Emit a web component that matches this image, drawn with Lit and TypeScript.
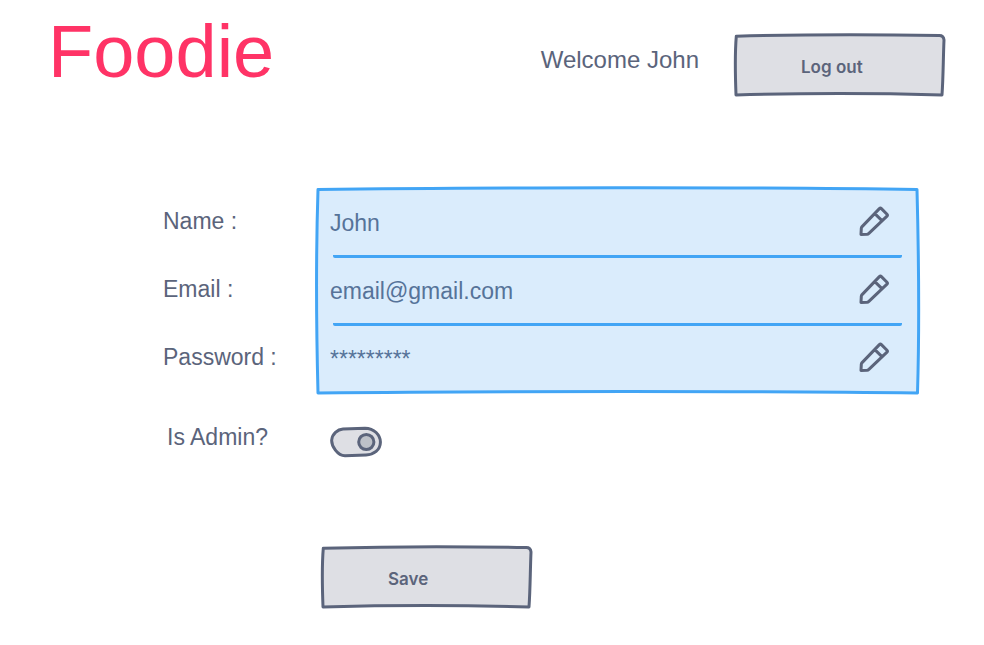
import { LitElement, html, css, svg } from "lit";
import { customElement, property, state } from "lit/decorators.js";

const BUTTON_OUTLINE =
  "M2.3 2.2 C60 0.6 150 0.4 205 1.6 Q209.5 1.4 210 6 C209.2 25 209.2 45 208 61 C150 59.4 60 59.4 2 61 C1.2 40 0.8 20 2.3 2.2 Z";

const PANEL_OUTLINE =
  "M2 2.5 C150 0.5 450 0 601 2.5 C602.5 60 603.5 140 601.5 206 C450 204 180 204 2 206 C0.3 140 -0.2 70 2 2.5 Z";

@customElement("sketch-button")
class SketchButton extends LitElement {
  @property() label = "";

  static styles = css`
    :host {
      display: block;
    }
    .button {
      display: grid;
      align-items: center;
      width: 211px;
      height: 62px;
      padding: 0;
      border: 0;
      background: none;
      color: #5b647b;
      font: 600 17px/24px Inter, "Liberation Sans", sans-serif;
      text-align: left;
      cursor: pointer;
    }
    .frame,
    .text {
      grid-area: 1 / 1;
    }
    .frame {
      width: 100%;
      height: 100%;
      overflow: visible;
      fill: #dedfe4;
      stroke: #5b647b;
      stroke-width: 3;
      stroke-linejoin: round;
    }
    .text {
      padding: 3px 0 0 67px;
    }
  `;

  render() {
    return html`
      <button class="button" type="button">
        <svg class="frame" viewBox="0 0 211 62" preserveAspectRatio="none" aria-hidden="true">
          <path d=${BUTTON_OUTLINE} />
        </svg>
        <span class="text">${this.label}</span>
      </button>
    `;
  }
}

interface Field {
  id: string;
  label: string;
  value: string;
}

@customElement("app-root")
class AppRoot extends LitElement {
  @state() private admin = true;

  private fields: Field[] = [
    { id: "name", label: "Name :", value: "John" },
    { id: "email", label: "Email :", value: "email@gmail.com" },
    { id: "password", label: "Password :", value: "*********" },
  ];

  static styles = css`
    :host {
      display: block;
      background: #ffffff;
      color: #5b647b;
      font: 23px/28px "Liberation Sans", Arial, sans-serif;
    }
    .header {
      display: flex;
      justify-content: space-between;
      align-items: flex-start;
      padding: 15px 39px 0 48px;
    }
    .title {
      margin: 0;
      color: #ff3366;
      font-size: 74px;
      line-height: 74px;
      font-weight: normal;
    }
    .session {
      display: flex;
      gap: 35px;
      padding-top: 19px;
    }
    .welcome {
      margin: 0;
      font-size: 24px;
      line-height: 52px;
    }
    .form {
      display: grid;
      grid-template-columns: 153px 1fr;
      padding: 91px 65px 32px 163px;
    }
    .labels {
      display: grid;
      grid-auto-rows: 68px;
      align-items: center;
    }
    .panel {
      display: grid;
      height: 207px;
    }
    .panel-frame,
    .rows {
      grid-area: 1 / 1;
      min-width: 0;
    }
    .panel-frame {
      width: 100%;
      height: 207px;
      overflow: visible;
      fill: #daecfc;
      stroke: #42a5f5;
      stroke-width: 3;
      stroke-linejoin: round;
    }
    .rows {
      display: grid;
      grid-auto-rows: 68px;
      padding: 3px 17px 0;
    }
    .row {
      display: flex;
      align-items: center;
      gap: 16px;
      padding-right: 13px;
      border-bottom: 3px solid #42a5f5;
      border-radius: 2px;
    }
    .row:last-child {
      border-bottom-color: transparent;
    }
    .input {
      flex: 1;
      min-width: 0;
      margin-left: -3px;
      padding: 0;
      border: 0;
      outline: 0;
      background: none;
      color: #567399;
      font: inherit;
    }
    .edit {
      width: 30px;
      height: 34px;
      padding: 0 0 4px;
      border: 0;
      background: none;
      cursor: pointer;
    }
    .pencil {
      display: block;
      fill: none;
      stroke: #5b647b;
      stroke-width: 3;
      stroke-linecap: round;
      stroke-linejoin: round;
    }
    .admin-label {
      padding: 29px 0 0 4px;
    }
    .admin-control {
      padding: 32px 0 0 14px;
    }
    .toggle {
      display: grid;
      width: 52px;
      height: 32px;
    }
    .toggle-input,
    .toggle-face {
      grid-area: 1 / 1;
      width: 52px;
      height: 32px;
      margin: 0;
    }
    .toggle-input {
      opacity: 0;
      z-index: 1;
      cursor: pointer;
    }
    .toggle-face {
      stroke: #5b647b;
      stroke-width: 3;
      fill: #dedfe4;
    }
    .knob {
      fill: #bdc1c8;
    }
    .actions {
      grid-column: 2;
      padding: 88px 0 0 5px;
    }
  `;

  private pencil() {
    return svg`
      <svg class="pencil" width="30" height="30" viewBox="0 0 30 30" aria-hidden="true">
        <path d="M2 28.4 L2.3 22.4 Q2.4 21.4 3.1 20.6 L20.4 2.6 Q21.4 1.6 22.4 2.6 L28 8.2 Q29 9.2 28 10.2 L9.9 27.4 Q9 28.2 8 28.3 Z M15.8 7.6 L23.2 14.8" />
      </svg>
    `;
  }

  render() {
    return html`
      <header class="header">
        <h1 class="title">Foodie</h1>
        <div class="session">
          <p class="welcome">Welcome John</p>
          <sketch-button label="Log out"></sketch-button>
        </div>
      </header>
      <form class="form">
        <div class="labels">
          ${this.fields.map((f) => html`<label for=${f.id}>${f.label}</label>`)}
        </div>
        <div class="panel">
          <svg class="panel-frame" viewBox="0 0 603 207" preserveAspectRatio="none" aria-hidden="true">
            <path d=${PANEL_OUTLINE} />
          </svg>
          <div class="rows">
            ${this.fields.map(
              (f) => html`
                <div class="row">
                  <input class="input" id=${f.id} type="text" .value=${f.value} />
                  <button class="edit" type="button" aria-label=${`Edit ${f.id}`}>${this.pencil()}</button>
                </div>
              `
            )}
          </div>
        </div>
        <label class="admin-label" for="admin">Is Admin?</label>
        <div class="admin-control">
          <div class="toggle">
            <input
              class="toggle-input"
              id="admin"
              type="checkbox"
              .checked=${this.admin}
              @change=${() => (this.admin = !this.admin)}
            />
            <svg class="toggle-face" viewBox="0 0 52 32" aria-hidden="true">
              <path d="M1.7 14 C2.2 8 7.5 3.4 13 3 L35 2.2 C44 2.2 50.6 9 50.4 16.5 C50.2 24 44 28.6 36 29 L15 29.8 C7.5 29.6 1.3 20 1.7 14 Z" />
              <circle class="knob" cx=${this.admin ? 36.3 : 15} cy="16" r="7.6" />
            </svg>
          </div>
        </div>
        <div class="actions">
          <sketch-button label="Save"></sketch-button>
        </div>
      </form>
    `;
  }
}
